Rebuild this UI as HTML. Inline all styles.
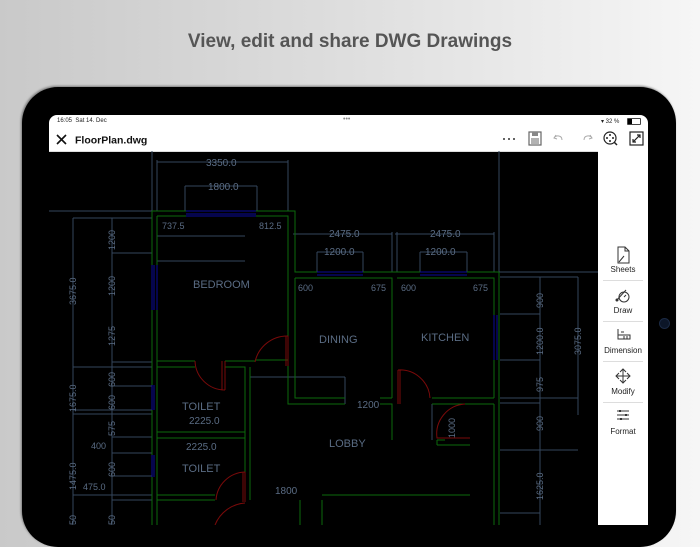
<!DOCTYPE html>
<html><head><meta charset="utf-8"><style>
html,body{margin:0;padding:0}
body{width:700px;height:525px;overflow:hidden;position:relative;background:linear-gradient(90deg,#c9c9c9 0%,#dcdcdc 45%,#f6f6f6 100%);font-family:"Liberation Sans",sans-serif}
.title{position:absolute;left:0;width:700px;top:31px;text-align:center;font-size:19px;font-weight:bold;color:#555}
.bezel{position:absolute;left:22px;top:87px;width:654px;height:460px;background:#000;border-radius:36px;box-shadow:-1px -1px 2px #777}
.screen{position:absolute;left:49px;top:115px;width:599px;height:410px;background:#000;border-radius:8px 8px 0 0;overflow:hidden}
.status{position:absolute;left:0;top:0;width:599px;height:14px;background:#fff;font-size:6px;color:#222}
.nav{position:absolute;left:0;top:14px;width:599px;height:22px;background:#fff;border-bottom:1px solid #ddd}
.side{position:absolute;left:549px;top:36px;width:50px;height:374px;background:#fff}
.it{position:absolute;left:0;width:50px;text-align:center;font-size:8px;color:#222}
.sep{position:absolute;left:5px;width:40px;height:1px;background:#ddd}
svg text{font-family:"Liberation Sans",sans-serif}
</style></head><body>
<div class="title">View, edit and share DWG Drawings</div>
<div class="bezel"></div>
<div style="position:absolute;left:659px;top:318px;width:9px;height:9px;border-radius:50%;background:#0c1628;border:1px solid #1b2a44"></div>
<div class="screen">
 <div class="status"><span style="position:absolute;left:8px;top:3px">16:05&nbsp;&nbsp;Sat 14. Dec</span>
 <span style="position:absolute;left:294px;top:1px;font-size:7px;color:#888">•••</span>
 <span style="position:absolute;left:552px;top:3px">▾ 32 %</span>
 <span style="position:absolute;left:578px;top:3px;width:12px;height:5px;border:1px solid #444;border-radius:1px"><span style="display:block;width:4px;height:5px;background:#000"></span></span></div>
 <div class="nav">
  <svg width="599" height="22" style="position:absolute;left:0;top:0">
   <path d="M8 6L17 15M17 6L8 15" stroke="#111" stroke-width="1.6"/>
   <text x="26" y="14.5" font-size="10.5" fill="#111" font-weight="bold" style="font-weight:600">FloorPlan.dwg</text>
   <g fill="#333"><circle cx="455" cy="10" r="1"/><circle cx="460" cy="10" r="1"/><circle cx="465" cy="10" r="1"/></g>
   <rect x="480" y="3" width="12" height="13" fill="none" stroke="#666" stroke-width="1.2"/><rect x="483" y="3" width="6" height="4" fill="#888"/><path d="M482 10h8M482 12h8M482 14h8" stroke="#666"/>
   <path d="M507 6l-2 3 3 1M505 9c2-3 8-3 8 2" fill="none" stroke="#aaa" stroke-width="1"/>
   <path d="M541 6l2 3-3 1M543 9c-2-3-8-3-8 2" fill="none" stroke="#aaa" stroke-width="1"/>
   <circle cx="561" cy="9" r="6" fill="none" stroke="#222" stroke-width="1.2"/><path d="M565 13l3 3" stroke="#222" stroke-width="1.5"/>
   <g fill="#222"><circle cx="561" cy="6" r="1"/><circle cx="558" cy="9" r="1"/><circle cx="564" cy="9" r="1"/><circle cx="561" cy="12" r="1"/></g>
   <rect x="581" y="3" width="13" height="13" fill="none" stroke="#222" stroke-width="1.2"/><path d="M584 13l7-7M588 6h3v3M584 10v3h3" fill="none" stroke="#222" stroke-width="1.2"/>
  </svg>
 </div>
</div>
<svg width="700" height="525" style="position:absolute;left:0;top:0">
<g stroke="#34465c" stroke-width="1" fill="none">
 <path d="M152 151V525M49 211H152M499 151V272M499 272H598"/>
 <path d="M157 162H288M157 160V211M288 160V211"/>
 <path d="M185 186H257M185 186V211M257 186V211"/>
 <path d="M293 234H392M395 234H494M392 232V272M397 232V272M494 232V272"/>
 <path d="M317 252H363M317 252V272M363 252V272M420 252H467M420 252V272M467 252V272"/>
 <path d="M73 218V525M112 218V525M73 218H152M112 253H152M112 362H152M73 367H152M112 386H152M112 410H152M73 410H152M73 414H152M112 437H152M112 453H152M112 476H152M73 495H152M112 500H152"/>
 <path d="M157 236H245M157 261H245M250 377H345M345 377V404"/>
 <path d="M540 277V525M578 277V415M500 277H578M500 314H540M500 360H540M500 398H578M500 403H540M500 450H578M500 513H540"/>
 <path d="M300 404H345M380 404H392M432 404V440"/>
</g>
<g font-size="10" fill="#5a6c84">
 <text x="206" y="166">3350.0</text><text x="208" y="190">1800.0</text>
 <text x="162" y="229" font-size="9">737.5</text><text x="259" y="229" font-size="9">812.5</text>
 <text x="329" y="237">2475.0</text><text x="430" y="237">2475.0</text>
 <text x="324" y="255">1200.0</text><text x="425" y="255">1200.0</text>
 <text x="298" y="291" font-size="9">600</text><text x="371" y="291" font-size="9">675</text><text x="401" y="291" font-size="9">600</text><text x="473" y="291" font-size="9">675</text>
 <text x="189" y="424">2225.0</text><text x="186" y="450">2225.0</text>
 <text x="91" y="449" font-size="9">400</text><text x="83" y="490" font-size="9">475.0</text>
 <text x="357" y="408">1200</text><text x="275" y="494">1800</text>
 <text x="193" y="288" font-size="11">BEDROOM</text><text x="319" y="343" font-size="11">DINING</text>
 <text x="421" y="341" font-size="11">KITCHEN</text><text x="182" y="410" font-size="11">TOILET</text>
 <text x="182" y="472" font-size="11">TOILET</text><text x="329" y="447" font-size="11">LOBBY</text>
 <g font-size="9">
  <text transform="translate(76,305) rotate(-90)">3675.0</text>
  <text transform="translate(115,250) rotate(-90)">1200</text>
  <text transform="translate(115,296) rotate(-90)">1200</text>
  <text transform="translate(115,346) rotate(-90)">1275</text>
  <text transform="translate(76,412) rotate(-90)">1675.0</text>
  <text transform="translate(115,387) rotate(-90)">600</text>
  <text transform="translate(115,410) rotate(-90)">600</text>
  <text transform="translate(115,436) rotate(-90)">575</text>
  <text transform="translate(115,477) rotate(-90)">600</text>
  <text transform="translate(76,490) rotate(-90)">1475.0</text>
  <text transform="translate(115,525) rotate(-90)">50</text>
  <text transform="translate(76,525) rotate(-90)">50</text>
  <text transform="translate(543,308) rotate(-90)">900</text>
  <text transform="translate(543,355) rotate(-90)">1200.0</text>
  <text transform="translate(543,392) rotate(-90)">975</text>
  <text transform="translate(543,431) rotate(-90)">900</text>
  <text transform="translate(543,500) rotate(-90)">1625.0</text>
  <text transform="translate(581,355) rotate(-90)">3075.0</text>
  <text transform="translate(455,438) rotate(-90)">1000</text>
 </g>
</g>
<g stroke="#0b6a0b" stroke-width="1" fill="none">
 <path d="M152 211H295V272H499M157 216H288V360H255M157 216V525M152 211V525"/>
 <path d="M295 278V398H345M288 360V404H345M295 278H392V398M397 278H494V398"/>
 <path d="M499 272V525M494 404V525M392 398H380M380 404H392V440M432 398H494M432 404H494"/>
 <path d="M157 361H195M157 367H195M225 361H255M225 367H245V500M250 367V500M157 432H245M157 438H245M157 495H215M157 500H215"/>
 <path d="M437 440H445M437 445V440M437 445H470M322 495H470M322 500V525M300 500V525M300 495"/>
</g>
<g stroke="#0a0a9a" stroke-width="1" fill="none">
 <path d="M186 211H256M186 214H256M186 216H256"/>
 <path d="M152 265V310M154 265V310M157 265V310M152 385V410M154 385V410M152 455V477M154 455V477"/>
 <path d="M317 272H363M317 275H363M420 272H467M420 275H467M494 315V360M497 315V360"/>
</g>
<g stroke="#7a0a0a" stroke-width="1" fill="none">
 <path d="M195 361A30 30 0 0 0 225 390M222 361V390M225 361V390"/>
 <path d="M288 336A33 33 0 0 0 255 362M286 336V366M288 336V366"/>
 <path d="M398 370A30 30 0 0 1 430 398M398 370V404M400 370V404"/>
 <path d="M465 404A30 30 0 0 0 437 438H470"/>
 <path d="M245 472A30 30 0 0 0 216 500M243 472V502M245 472V502M245 503A35 35 0 0 0 215 525"/>
</g>
</svg>
<div class="side" style="left:598px;top:151px">
 <svg width="50" height="300" style="position:absolute;left:0;top:0">
  <g fill="none" stroke="#333" stroke-width="1">
   <path d="M20 96h7l4 4v12H20z M27 96v4h4 M21 111l5-6"/>
   <circle cx="26" cy="146" r="5"/><path d="M18 150l10-11M26 146l2-2"/><circle cx="19" cy="149" r="1" fill="#333"/>
   <path d="M20 178v10h12v-4h-12M23 181h3M23 184h3M26 185v3M29 185v3"/>
   <path d="M25 218v14M18 225h14M22 221l3-3 3 3M22 229l3 3 3-3M21 222l-3 3 3 3M29 222l3 3-3 3"/>
   <path d="M19 260h12M19 264h12M19 268h12"/><path d="M22 259v2M28 263v2M23 267v2" stroke-width="2"/>
  </g>
 </svg>
 <div class="it" style="top:114px">Sheets</div><div class="sep" style="top:129px"></div>
 <div class="it" style="top:155px">Draw</div><div class="sep" style="top:170px"></div>
 <div class="it" style="top:195px">Dimension</div><div class="sep" style="top:210px"></div>
 <div class="it" style="top:236px">Modify</div><div class="sep" style="top:251px"></div>
 <div class="it" style="top:276px">Format</div>
</div>
</body></html>
